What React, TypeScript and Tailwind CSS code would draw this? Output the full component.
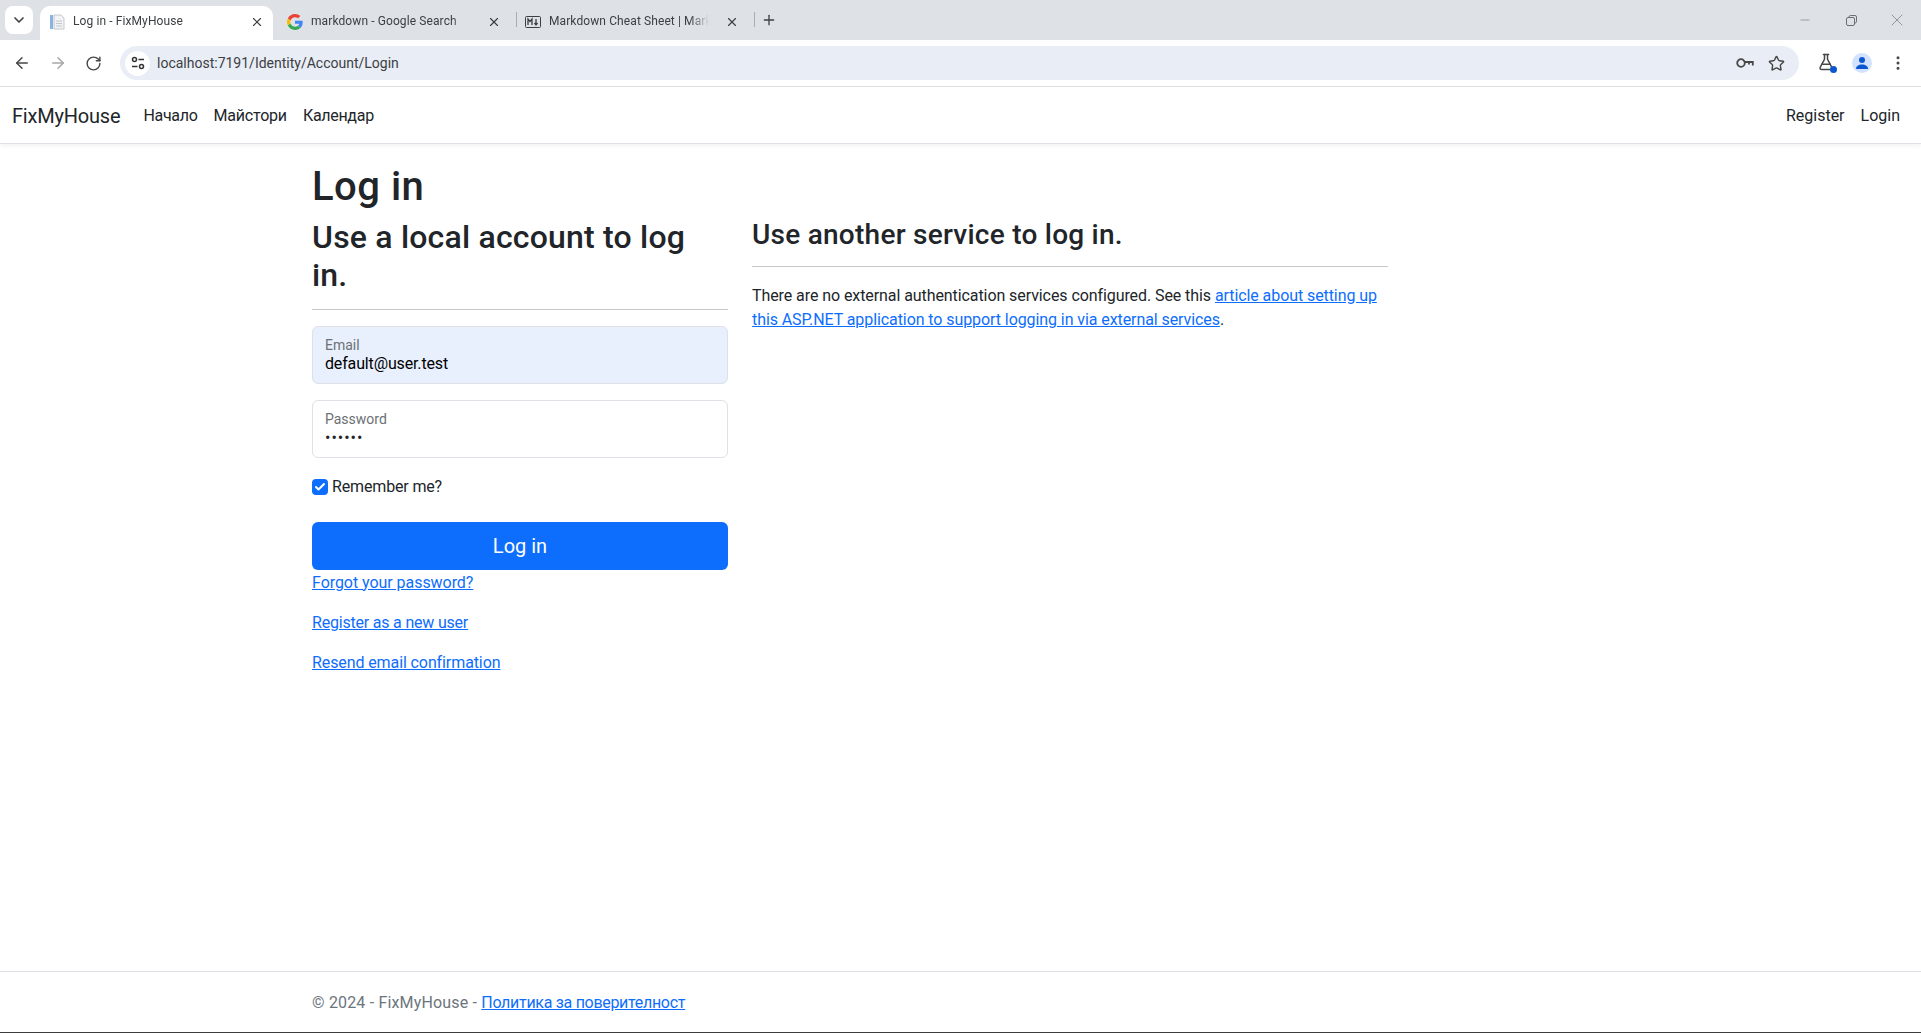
import { ArrowLeft, ArrowRight, ChevronDown, EllipsisVertical, FlaskConical, Minus, Plus, RotateCw, Star, X, Check } from 'lucide-react';

const font = "font-['Roboto','Open_Sans',sans-serif]";

function Tab({ title, icon, active, sep }: { title: string; icon: React.ReactNode; active?: boolean; sep?: boolean }) {
  return (
    <div className={`relative flex items-center h-[34px] pl-2 pr-2 rounded-t-[10px] ${active ? 'bg-white w-[233px] mr-[5px]' : 'w-[238px]'}`}>
      <div className="w-4 h-4 flex items-center justify-center shrink-0 ml-[1px] mb-[2px]">{icon}</div>
      <span className="ml-[8px] text-xs tracking-[0.1px] text-[#3c4043] whitespace-nowrap overflow-hidden flex-1 pb-[4px] [mask-image:linear-gradient(to_right,black_88%,transparent)]">{title}</span>
      <X className={`w-3.5 h-3.5 text-[#3c4043] shrink-0 ml-4 mb-[2px] ${active ? 'mr-[1px]' : 'mr-[7px]'}`} strokeWidth={2} />
      {sep && <div className="absolute -right-px top-[6px] w-px h-[15px] bg-[#a9adb3]" />}
    </div>
  );
}

function ChromeBar() {
  return (
    <div>
      <div className="h-10 bg-[#dee1e6] flex items-end relative">
        <div className="h-7 ml-[5px] mb-[6px] bg-white rounded-lg flex items-center justify-center shrink-0 w-[28px]">
          <ChevronDown className="w-4 h-4 text-[#3c4043]" strokeWidth={2.5} />
        </div>
        <div className="flex ml-[7px]">
          <Tab
            active
            title="Log in - FixMyHouse"
            icon={
              <svg width="16" height="16" viewBox="0 0 16 16">
                <path d="M1 1h3v14H1z" fill="#8ab4e0" />
                <path d="M5 1h7l3 3v11H5z" fill="#f1f3f4" stroke="#c4c7cc" strokeWidth="1" />
                <path d="M7 7h6M7 9.500h6M7 12h6" stroke="#c4c7cc" strokeWidth="1" />
              </svg>
            }
          />
          <Tab
            title="markdown - Google Search"
            sep
            icon={
              <svg width="16" height="16" viewBox="0 0 48 48">
                <path fill="#EA4335" d="M24 9.500c3.500 0 6.700 1.200 9.200 3.600l6.900-6.900C35.900 2.400 30.500 0 24 0 14.600 0 6.500 5.400 2.600 13.200l8 6.200C12.400 13.700 17.700 9.500 24 9.500z" />
                <path fill="#4285F4" d="M47 24.500c0-1.600-.1-3.100-.4-4.500H24v9h13c-.6 3-2.200 5.500-4.800 7.200l7.700 6C44.400 38.500 47 32.100 47 24.500z" />
                <path fill="#FBBC05" d="M10.600 28.600A14.500 14.500 0 0 1 10.600 19.400l-8-6.200a24 24 0 0 0 0 21.600z" />
                <path fill="#34A853" d="M24 48c6.500 0 11.900-2.100 15.900-5.800l-7.700-6c-2.200 1.400-4.900 2.300-8.200 2.300-6.300 0-11.600-4.200-13.400-9.900l-8 6.200C6.500 42.600 14.600 48 24 48z" />
              </svg>
            }
          />
          <Tab
            title="Markdown Cheat Sheet | Markdown Guide"
            sep
            icon={
              <svg width="16" height="12" viewBox="0 0 16 12" fill="none" stroke="#3c4043">
                <rect x="0.5" y="0.5" width="15" height="11" rx="1" />
                <path d="M3 9V3l2 2.500L7 3v6M11 3v5.500M9.500 7l1.500 2 1.500-2" strokeWidth="1.300" />
              </svg>
            }
          />
        </div>
        <div className="w-7 h-7 mb-[6px] ml-[1px] flex items-center justify-center">
          <Plus className="w-4 h-4 text-[#3c4043]" strokeWidth={2} />
        </div>
        <div className="absolute right-[1px] top-0 h-10 flex items-center text-[#6b6e73]">
          <div className="w-[46px] flex justify-center"><Minus className="w-[14px] h-[14px]" strokeWidth={1} /></div>
          <div className="w-[46px] flex justify-center">
            <svg width="11" height="11" viewBox="0 0 11 11" fill="none" stroke="currentColor" strokeWidth="1">
              <rect x="0.5" y="2.500" width="8" height="8" rx="1.500" />
              <path d="M3 2.500V2a1.500 1.500 0 0 1 1.500-1.500h4.500A1.500 1.500 0 0 1 10.500 2v4.500A1.500 1.500 0 0 1 9 8h-.5" />
            </svg>
          </div>
          <div className="w-[46px] flex justify-center"><X className="w-5 h-5" strokeWidth={0.8} /></div>
        </div>
      </div>
      <div className="h-[48px] bg-white flex items-center border-b border-[#e0e0e0] rounded-t-[8px] -mt-px pt-[1px]">
        <div className="flex items-center w-[120px] shrink-0 pl-[13px] gap-[18px] text-[#474747]">
          <ArrowLeft className="w-[18px] h-[18px]" strokeWidth={2} />
          <ArrowRight className="w-[18px] h-[18px] text-[#a6a6a6]" strokeWidth={2} />
          <RotateCw className="w-[17px] h-[17px]" strokeWidth={2} />
        </div>
        <div className="flex-1 flex items-center h-[34px] bg-[#e9edf6] rounded-full pl-[5px] pr-[14px]">
          <div className="w-[25px] h-[25px] bg-white rounded-full flex items-center justify-center">
            <svg width="14" height="14" viewBox="0 0 14 14" fill="none" stroke="#333" strokeWidth="1.500">
              <circle cx="3.500" cy="3.500" r="2" />
              <path d="M7.500 3.500H13M1 10.500h5.500" />
              <circle cx="10.500" cy="10.500" r="2" />
            </svg>
          </div>
          <span className="ml-[7px] text-sm text-[#3c4043] flex-1">localhost:7191/Identity/Account/Login</span>
          <svg width="18" height="12" viewBox="0 0 18 12" fill="none" stroke="#474747" strokeWidth="1.800" className="mr-[14px]">
            <circle cx="5" cy="6" r="3.800" />
            <path d="M8.800 5h8v3.500M13 5v2.500" />
          </svg>
          <Star className="w-[17px] h-[17px] text-[#474747]" strokeWidth={2} />
        </div>
        <div className="flex items-center w-[122px] shrink-0 pl-[18px] text-[#474747] gap-[15px]">
          <div className="relative w-5 h-5">
            <FlaskConical className="w-[18px] h-[18px]" strokeWidth={2} />
            <div className="absolute right-0 bottom-0 w-[7px] h-[7px] rounded-full bg-[#0b57d0]" />
          </div>
          <div className="w-5 h-5 rounded-full bg-[#d3e3fd] flex items-center justify-center">
            <svg width="14" height="14" viewBox="0 0 14 14" fill="#0b57d0">
              <circle cx="7" cy="4" r="3" />
              <path d="M1 13c0-3 2.500-4.500 6-4.500s6 1.500 6 4.500z" />
            </svg>
          </div>
          <EllipsisVertical className="w-[18px] h-[18px] ml-[2px]" strokeWidth={2} />
        </div>
      </div>
    </div>
  );
}

export default function App() {
  return (
    <div className={`${font} h-[1033px] bg-white text-[#212529] text-base flex flex-col overflow-hidden`}>
      <ChromeBar />

      {/* navbar */}
      <nav className="h-[57px] bg-white flex items-center justify-between pl-3 pr-[21px] pt-[1px] border-b border-[#dee2e6] shadow-[0_2px_4px_rgba(0,0,0,0.05)]">
        <div className="flex items-center">
          <a className="text-xl tracking-[-0.2px] mr-[15px]">FixMyHouse</a>
          <a className="px-2 tracking-[-0.3px]">Начало</a>
          <a className="px-2 tracking-[-0.2px]">Майстори</a>
          <a className="px-2 tracking-[-0.3px]">Календар</a>
        </div>
        <div className="flex items-center gap-4">
          <a>Register</a>
          <a>Login</a>
        </div>
      </nav>

      <main className="w-[1320px] ml-[300px] px-3 pt-[19px] flex-1">
        <h1 className="text-[40px] leading-[48px] tracking-[0.5px] font-medium mb-[7px]">Log in</h1>
        <div className="flex gap-6">
          <div className="w-[416px] shrink-0">
            <h2 className="text-[32px] leading-[38.4px] tracking-[0.2px] font-medium pr-4">Use a local account to log in.</h2>
            <hr className="mt-[14px] mb-4 border-[#c6c7c8]" />
            <div className="h-[58px] border border-[#dee2e6] rounded-[6px] bg-[#e8f0fe] px-3 pt-[9px] mb-4">
              <div className="text-sm leading-[18px] text-[#6c7074]">Email</div>
              <div className="leading-[20px] text-black tracking-[-0.15px]">default@user.test</div>
            </div>
            <div className="h-[58px] border border-[#dee2e6] rounded-[6px] bg-white px-3 pt-[9px] mb-[17px]">
              <div className="text-sm leading-[18px] text-[#6c7074]">Password</div>
              <div className="leading-[20px] text-base tracking-[1px]">••••••</div>
            </div>
            <label className="flex items-center gap-1 h-6 mb-[23px] tracking-[-0.15px]">
              <span className="w-4 h-4 rounded-[4px] bg-[#0d6efd] flex items-center justify-center">
                <Check className="w-3 h-3 text-white" strokeWidth={4} />
              </span>
              Remember me?
            </label>
            <button className="w-full h-12 bg-[#0d6efd] text-white text-xl rounded-[6px]">Log in</button>
            <div className="flex flex-col mt-[1px]">
              <a className="text-[#0d6efd] underline mb-4 leading-6 w-fit tracking-[-0.05px]">Forgot your password?</a>
              <a className="text-[#0d6efd] underline mb-4 leading-6 w-fit tracking-[-0.2px]">Register as a new user</a>
              <a className="text-[#0d6efd] underline leading-6 w-fit tracking-[-0.1px]">Resend email confirmation</a>
            </div>
          </div>
          <div className="w-[636px] shrink-0">
            <h3 className="text-[28px] leading-[33.6px] tracking-[0.25px] font-medium">Use another service to log in.</h3>
            <hr className="mt-[14px] mb-[17px] border-[#c6c7c8]" />
            <p className="leading-6 tracking-[-0.08px]">
              There are no external authentication services configured. See this{' '}
              <a className="text-[#0d6efd] underline">
                article about setting up this ASP.NET application to support logging in via external services
              </a>
              .
            </p>
          </div>
        </div>
      </main>

      <footer className="h-[62px] border-t border-[#dee2e6] shrink-0 text-[#6c757d] relative">
        <div className="w-[1320px] ml-[300px] px-3 leading-[62px] tracking-[0.17px]">
          © 2024 - FixMyHouse - <a className="text-[#0d6efd] underline tracking-[-0.3px]">Политика за поверителност</a>
        </div>
        <div className="absolute bottom-0 left-0 right-0 h-px bg-[#3c3c3c]" />
      </footer>
    </div>
  );
}
